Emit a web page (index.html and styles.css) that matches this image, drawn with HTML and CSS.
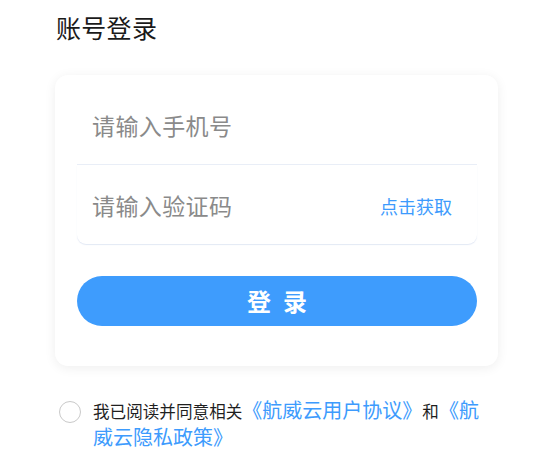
FILE: index.html
```html
<!DOCTYPE html>
<html lang="zh-CN">
<head>
<meta charset="utf-8">
<title>账号登录</title>
<link rel="stylesheet" href="styles.css">
</head>
<body>
<div class="page">
  <h1 class="title">账号登录</h1>
  <div class="card">
    <div class="field field-phone">
      <span class="placeholder">请输入手机号</span>
    </div>
    <div class="field field-code">
      <span class="placeholder">请输入验证码</span>
      <span class="get-code">点击获取</span>
    </div>
    <button class="login-btn">登录</button>
  </div>
  <div class="agree">
    <span class="check"></span>
    <p class="agree-text">我已阅读并同意相关<span class="link">《航威云用户协议》</span>和<span class="link">《航威云隐私政策》</span></p>
  </div>
</div>
</body>
</html>
```

FILE: styles.css
```css
* {
  box-sizing: border-box;
}

html, body {
  margin: 0;
  padding: 0;
  background: #ffffff;
}

body {
  font-family: "Noto Sans CJK SC", "Noto Sans", sans-serif;
  color: #1f1f1f;
}

.page {
  width: 552px;
  padding: 11px 54px 0 55px;
}

.title {
  margin: 0 0 32px 1px;
  font-size: 25px;
  line-height: 32px;
  font-weight: 400;
  letter-spacing: 0.3px;
  color: #1a1a1a;
}

.card {
  background: #ffffff;
  border-radius: 13px;
  box-shadow: 0 2px 12px rgba(0, 0, 0, 0.07);
  padding: 10px 21px 40px 22px;
  display: flex;
  flex-direction: column;
}

.field {
  height: 80px;
  display: flex;
  align-items: center;
  justify-content: space-between;
  padding: 0 25px 0 15px;
}

.field-phone {
  border-bottom: 1px solid #e9eef7;
}

.field-code {
  height: 79px;
  border-radius: 0 0 9px 9px;
  box-shadow: 0 1px 1px rgba(190, 205, 230, 0.45);
}

.placeholder {
  font-size: 23px;
  color: #8a8a8a;
  letter-spacing: 0.4px;
}

.get-code {
  font-size: 18px;
  color: #3d9bfd;
  padding-top: 2px;
}

.login-btn {
  margin-top: 32px;
  height: 50px;
  border: none;
  border-radius: 25px;
  background: #3e9cfd;
  color: #ffffff;
  font-family: "Noto Sans CJK SC", sans-serif;
  font-size: 24px;
  font-weight: 700;
  letter-spacing: 12px;
  text-indent: 12px;
  line-height: 50px;
  padding: 0;
}

.agree {
  display: flex;
  align-items: flex-start;
  gap: 12px;
  margin: 31px 12px 0 4px;
}

.check {
  flex: none;
  width: 22px;
  height: 22px;
  margin-top: 4px;
  border: 1px solid #c9c9c9;
  border-radius: 50%;
  background: #ffffff;
}

.agree-text {
  margin: 0;
  width: 392px;
  font-size: 16.6px;
  line-height: 26px;
  color: #1f1f1f;
}

.link {
  font-size: 20px;
  line-height: 26px;
  color: #3d9bfd;
}
```
